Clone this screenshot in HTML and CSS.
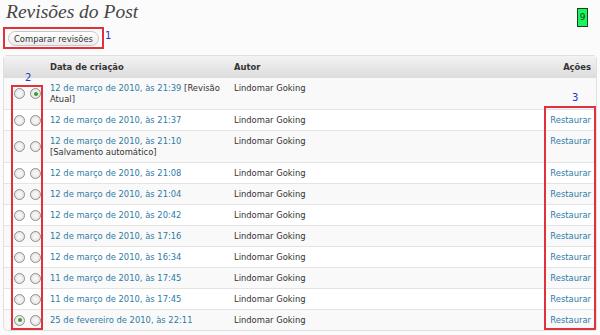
FILE: index.html
```html
<!DOCTYPE html>
<html lang="pt-BR">
<head>
  <meta charset="UTF-8">
  <title>Revisões do Post</title>
  <link rel="stylesheet" href="styles.css">
</head>
<body>
  <div class="wrap">
    <div class="top">
      <h2>Revisões do Post</h2>
      <span class="badge">9</span>
    </div>

    <div class="compare">
      <span class="mark mark-btn"><button class="btn">Comparar revisões</button></span>
      <span class="num">1</span>
    </div>

    <div class="table-box">
      <span class="mark mark-radios"></span>
      <span class="mark mark-actions"></span>
      <span class="num num-2">2</span>
      <span class="num num-3">3</span>
      <table class="revisions">
        <thead>
          <tr>
            <th class="col-radio"></th>
            <th class="col-date">Data de criação</th>
            <th class="col-author">Autor</th>
            <th class="col-actions">Ações</th>
          </tr>
        </thead>
        <tbody>
          <tr>
            <td class="col-radio"><span class="radio"></span><span class="radio on"></span></td>
            <td><a href="#">12 de março de 2010, às 21:39</a> [Revisão<br>Atual]</td>
            <td>Lindomar Goking</td>
            <td class="col-actions"></td>
          </tr>
          <tr>
            <td class="col-radio"><span class="radio"></span><span class="radio"></span></td>
            <td><a href="#">12 de março de 2010, às 21:37</a></td>
            <td>Lindomar Goking</td>
            <td class="col-actions"><a href="#">Restaurar</a></td>
          </tr>
          <tr>
            <td class="col-radio"><span class="radio"></span><span class="radio"></span></td>
            <td><a href="#">12 de março de 2010, às 21:10</a><br>[Salvamento automático]</td>
            <td>Lindomar Goking</td>
            <td class="col-actions"><a href="#">Restaurar</a></td>
          </tr>
          <tr>
            <td class="col-radio"><span class="radio"></span><span class="radio"></span></td>
            <td><a href="#">12 de março de 2010, às 21:08</a></td>
            <td>Lindomar Goking</td>
            <td class="col-actions"><a href="#">Restaurar</a></td>
          </tr>
          <tr>
            <td class="col-radio"><span class="radio"></span><span class="radio"></span></td>
            <td><a href="#">12 de março de 2010, às 21:04</a></td>
            <td>Lindomar Goking</td>
            <td class="col-actions"><a href="#">Restaurar</a></td>
          </tr>
          <tr>
            <td class="col-radio"><span class="radio"></span><span class="radio"></span></td>
            <td><a href="#">12 de março de 2010, às 20:42</a></td>
            <td>Lindomar Goking</td>
            <td class="col-actions"><a href="#">Restaurar</a></td>
          </tr>
          <tr>
            <td class="col-radio"><span class="radio"></span><span class="radio"></span></td>
            <td><a href="#">12 de março de 2010, às 17:16</a></td>
            <td>Lindomar Goking</td>
            <td class="col-actions"><a href="#">Restaurar</a></td>
          </tr>
          <tr>
            <td class="col-radio"><span class="radio"></span><span class="radio"></span></td>
            <td><a href="#">12 de março de 2010, às 16:34</a></td>
            <td>Lindomar Goking</td>
            <td class="col-actions"><a href="#">Restaurar</a></td>
          </tr>
          <tr>
            <td class="col-radio"><span class="radio"></span><span class="radio"></span></td>
            <td><a href="#">11 de março de 2010, às 17:45</a></td>
            <td>Lindomar Goking</td>
            <td class="col-actions"><a href="#">Restaurar</a></td>
          </tr>
          <tr>
            <td class="col-radio"><span class="radio"></span><span class="radio"></span></td>
            <td><a href="#">11 de março de 2010, às 17:45</a></td>
            <td>Lindomar Goking</td>
            <td class="col-actions"><a href="#">Restaurar</a></td>
          </tr>
          <tr>
            <td class="col-radio"><span class="radio on"></span><span class="radio"></span></td>
            <td><a href="#">25 de fevereiro de 2010, às 22:11</a></td>
            <td>Lindomar Goking</td>
            <td class="col-actions"><a href="#">Restaurar</a></td>
          </tr>
        </tbody>
      </table>
    </div>
  </div>
</body>
</html>
```

FILE: styles.css
```css
body {
  margin: 0;
  background: #fbfbfb;
  font-family: "DejaVu Sans", Verdana, sans-serif;
  font-size: 8.4px;
  color: #333;
}

.wrap {
  padding: 0 3px;
}

.top {
  display: flex;
  justify-content: space-between;
  align-items: flex-start;
  height: 27px;
}

h2 {
  margin: 1px 0 0 3px;
  font-family: "Liberation Serif", Georgia, serif;
  font-style: italic;
  font-weight: normal;
  font-size: 19.5px;
  line-height: 21px;
  color: #464646;
}

.badge {
  margin: 8px 9px 0 0;
  width: 9px;
  height: 17px;
  background: #19f55a;
  border: 1px solid #1c3d22;
  font-size: 9px;
  line-height: 17px;
  text-align: center;
  color: #143a1c;
}

.compare {
  display: flex;
  align-items: flex-start;
  height: 28px;
}

.mark {
  border: 2px solid #e0323a;
  box-sizing: border-box;
}

.mark-btn {
  display: inline-flex;
  width: 101px;
  height: 22px;
  padding: 2px 0 0 3px;
}

.btn {
  height: 15px;
  width: 91px;
  padding: 0;
  border: 1px solid #c6c6c6;
  border-radius: 8px;
  background: linear-gradient(#ffffff, #ececec);
  font-family: "DejaVu Sans", Verdana, sans-serif;
  font-size: 8.4px;
  color: #333;
}

.num {
  color: #2233cc;
  font-size: 10px;
  line-height: 12px;
  margin: 3px 0 0 1px;
}

.table-box {
  position: relative;
}

.revisions {
  width: 100%;
  border-collapse: separate;
  border-spacing: 0;
  border: 1px solid #dfdfdf;
  border-radius: 4px;
  background: #f9f9f9;
}

.revisions th {
  height: 22px;
  padding: 0;
  text-align: left;
  font-weight: bold;
  color: #333;
  background: linear-gradient(#f3f3f3, #dcdcdc);
}

.revisions td {
  padding: 5px 0 4px 0;
  vertical-align: top;
  line-height: 11px;
  border-top: 1px solid #e4e4e4;
}

.revisions tbody tr:nth-child(even) td {
  background: #fff;
}

.revisions tbody tr:first-child td {
  border-top: none;
}

.revisions a {
  color: #2e7ba6;
  text-decoration: none;
}

.col-radio {
  width: 36px;
  white-space: nowrap;
}

.col-date {
  width: 184px;
}

.col-actions.col-actions {
  text-align: right;
  padding-right: 5px;
}

.revisions td.col-radio,
.revisions th.col-radio {
  padding-left: 10px;
}

.revisions td.col-radio {
  vertical-align: middle;
  padding-top: 4px;
  padding-bottom: 4px;
}

.radio {
  display: inline-block;
  width: 9px;
  height: 9px;
  margin-right: 5px;
  border: 1px solid #8d8d8d;
  border-radius: 50%;
  background: radial-gradient(#fbfbfb, #dedede);
  position: relative;
  vertical-align: top;
}

.radio.on::after {
  content: "";
  position: absolute;
  left: 2.5px;
  top: 2.5px;
  width: 4px;
  height: 4px;
  border-radius: 50%;
  background: #2fa12f;
}

.mark-radios {
  position: absolute;
  left: 8px;
  top: 30px;
  width: 32px;
  height: 245px;
}

.mark-actions {
  position: absolute;
  right: 1px;
  top: 51px;
  width: 52px;
  height: 224px;
}

.num-2 {
  position: absolute;
  left: 22px;
  top: 17px;
  margin: 0;
}

.num-3 {
  position: absolute;
  left: 569px;
  top: 37px;
  margin: 0;
}
```
